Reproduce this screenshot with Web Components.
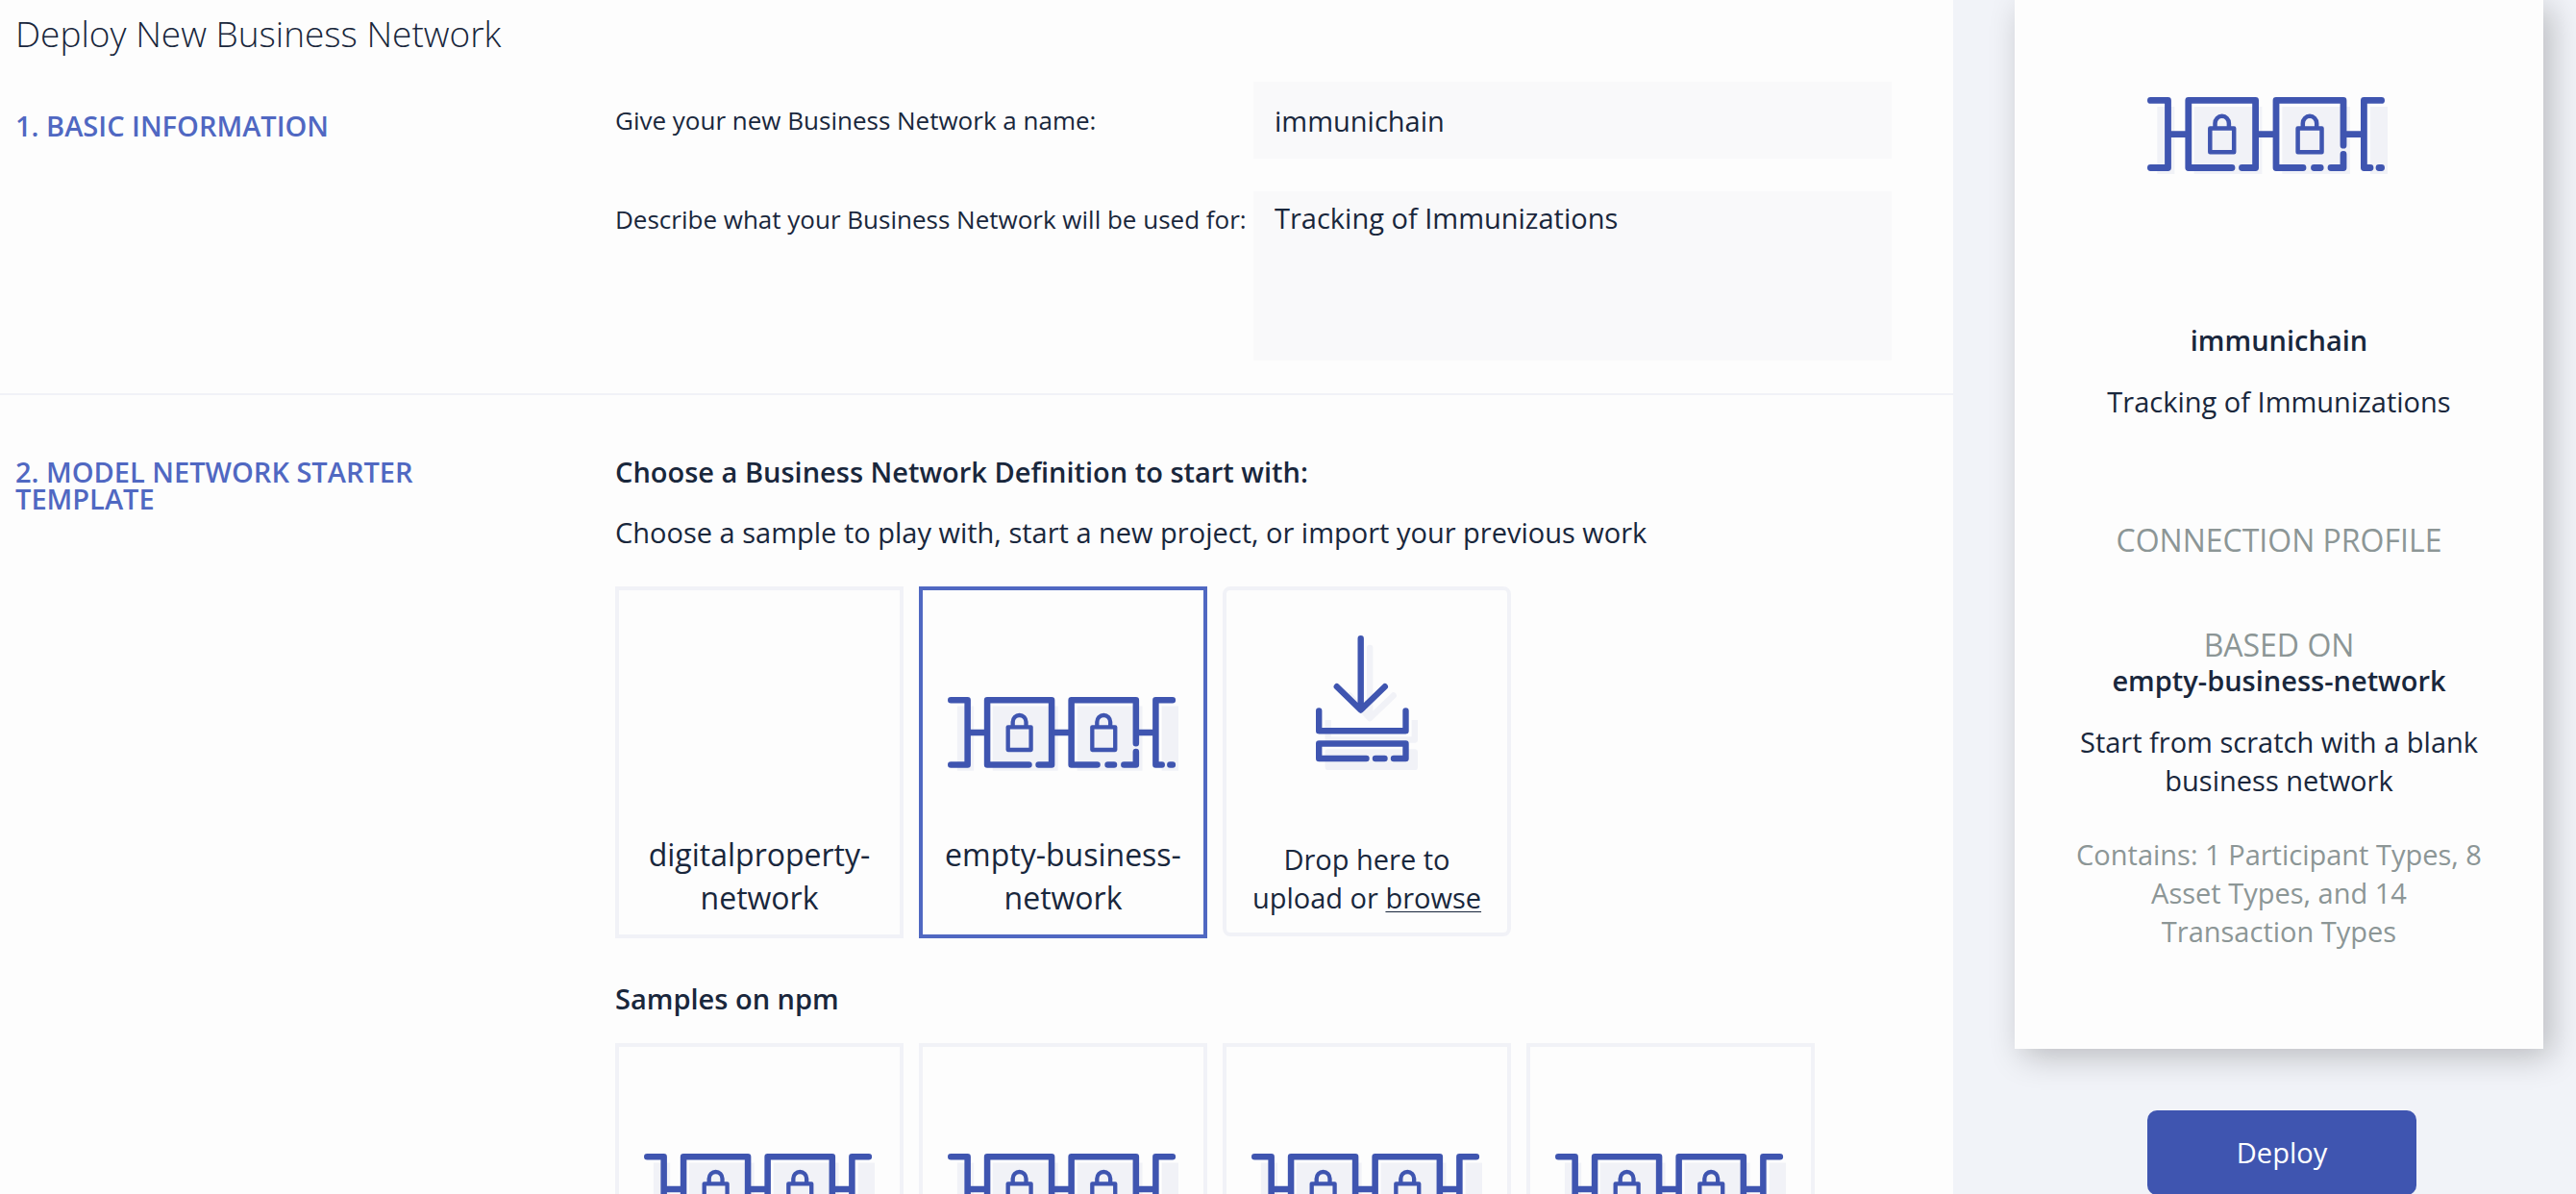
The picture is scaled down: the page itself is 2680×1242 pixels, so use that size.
<!DOCTYPE html>
<html lang="en">
<head>
<meta charset="utf-8">
<title>Deploy New Business Network</title>
<style>
  :root {
    --ink: #19273c;
    --accent: #3f55b0;
    --accent-soft: #5068c2;
    --muted: #8c9696;
    --line: #f1f2f7;
    --paper: #fdfdfd;
    --field: #f9f9fa;
  }
  body {
    margin: 0;
    font: 400 29px/40px "Open Sans", "Noto Sans", sans-serif;
    color: var(--ink);
    background: #f1f3f8;
  }
</style>
</head>
<body>
<deploy-page>
  <page-title slot="main">Deploy New Business Network</page-title>
  <form-section slot="main" heading="1. BASIC INFORMATION">
    <text-field label="Give your new Business Network a name:" value="immunichain"></text-field>
    <text-field multiline label="Describe what your Business Network will be used for:" value="Tracking of Immunizations"></text-field>
  </form-section>
  <form-section slot="main" class="templates" heading="2. MODEL NETWORK STARTER TEMPLATE">
    <template-group heading="Choose a Business Network Definition to start with:">
      <span slot="intro">Choose a sample to play with, start a new project, or import your previous work</span>
      <sample-card>digitalproperty-network</sample-card>
      <sample-card selected><chain-icon slot="icon"></chain-icon>empty-business-network</sample-card>
      <upload-card></upload-card>
    </template-group>
    <template-group heading="Samples on npm">
      <sample-card><chain-icon slot="icon"></chain-icon></sample-card>
      <sample-card><chain-icon slot="icon"></chain-icon></sample-card>
      <sample-card><chain-icon slot="icon"></chain-icon></sample-card>
      <sample-card><chain-icon slot="icon"></chain-icon></sample-card>
    </template-group>
  </form-section>
  <network-summary slot="side">
    <chain-icon slot="icon"></chain-icon>
    <span slot="name">immunichain</span>
    <span slot="description">Tracking of Immunizations</span>
    <span slot="base">empty-business-network</span>
    <span slot="base-description">Start from scratch with a blank business network</span>
    <span slot="contents">Contains: 1 Participant Types, 8 Asset Types, and 14 Transaction Types</span>
  </network-summary>
  <deploy-action slot="side">Deploy</deploy-action>
</deploy-page>

<script>
const define = (name, html, setup) => {
  const template = document.createElement('template');
  template.innerHTML = html;
  customElements.define(name, class extends HTMLElement {
    constructor() {
      super();
      this.attachShadow({ mode: 'open' }).append(template.content.cloneNode(true));
    }
    connectedCallback() {
      if (setup) setup(this, this.shadowRoot);
    }
  });
};

define('deploy-page', `
  <style>
    :host { display: flex; height: 100vh; }
    main, aside { box-sizing: border-box; overflow-y: auto; scrollbar-width: none; }
    main { flex: 1; min-width: 0; background: var(--paper); }
    aside { flex: 0 0 648px; padding: 0 34px 0 64px; }
  </style>
  <main><slot name="main"></slot></main>
  <aside><slot name="side"></slot></aside>`);

define('page-title', `
  <style>
    :host { display: block; padding: 11px 16px 26px; }
    h1 { margin: 0; font-size: 37px; line-height: 48px; font-weight: 300; }
  </style>
  <h1><slot></slot></h1>`);

define('form-section', `
  <style>
    :host { display: grid; grid-template-columns: 500px 1fr; column-gap: 124px; padding: 0 64px 34px 16px; border-bottom: 2px solid var(--line); }
    :host(.templates) { padding-top: 66px; border-bottom: 0; }
    h2 { margin: 32px 0 0; font-size: 29px; line-height: 28px; font-weight: 600; color: var(--accent-soft); }
    :host(.templates) h2 { margin-top: 0; }
    div { display: flex; flex-direction: column; gap: 34px; min-width: 0; }
    :host(.templates) div { gap: 49px; }
  </style>
  <h2></h2>
  <div><slot></slot></div>`, (host, root) => {
  root.querySelector('h2').textContent = host.getAttribute('heading');
});

define('text-field', `
  <style>
    :host { display: grid; grid-template-columns: 1fr 1fr; align-items: center; }
    :host([multiline]) { align-items: start; }
    label { font-size: 26px; line-height: 58px; white-space: nowrap; }
    input, textarea { display: block; box-sizing: border-box; width: 100%; height: 80px; margin: 0; padding: 8px 22px; border: 0; border-radius: 0; outline: 0; resize: none; background: var(--field); color: inherit; font: inherit; }
    textarea { height: 176px; }
  </style>
  <label for="control"></label>`, (host, root) => {
  root.querySelector('label').textContent = host.getAttribute('label');
  const control = document.createElement(host.hasAttribute('multiline') ? 'textarea' : 'input');
  control.id = 'control';
  control.value = host.getAttribute('value');
  root.append(control);
});

define('template-group', `
  <style>
    :host { display: block; }
    h3 { margin: 0 0 32px; font-size: 29px; line-height: 28px; font-weight: 600; }
    :host(.has-intro) h3 { margin-bottom: 29px; }
    p { margin: 0 0 36px; }
    p[hidden] { display: none; }
    div { display: flex; flex-wrap: wrap; align-items: flex-start; gap: 16px; }
  </style>
  <h3></h3>
  <p><slot name="intro"></slot></p>
  <div><slot></slot></div>`, (host, root) => {
  root.querySelector('h3').textContent = host.getAttribute('heading');
  const intro = Boolean(host.querySelector('[slot=intro]'));
  host.classList.toggle('has-intro', intro);
  root.querySelector('p').hidden = !intro;
});

define('sample-card', `
  <style>
    :host { display: block; flex: 0 0 300px; }
    button { display: flex; flex-direction: column; align-items: center; justify-content: flex-end; gap: 64px; box-sizing: border-box; width: 100%; height: 366px; margin: 0; padding: 16px; border: 4px solid var(--line); background: none; color: inherit; font: inherit; font-size: 32px; line-height: 45px; cursor: pointer; }
    :host([selected]) button { border-color: var(--accent-soft); }
    ::slotted(chain-icon) { width: 240px; }
    span { min-height: 90px; }
  </style>
  <button type="button"><slot name="icon"></slot><span><slot></slot></span></button>`, (host, root) => {
  root.querySelector('button').setAttribute('aria-pressed', host.hasAttribute('selected'));
});

define('upload-card', `
  <style>
    :host { display: flex; flex: 0 0 300px; flex-direction: column; align-items: center; justify-content: flex-end; gap: 73px; box-sizing: border-box; height: 364px; padding: 16px; border: 4px solid var(--line); border-radius: 8px; text-align: center; }
    svg { display: block; width: 106px; height: 140px; }
    p { margin: 0; }
    span { display: block; }
    a { color: inherit; text-decoration: underline; text-decoration-thickness: 1px; text-underline-offset: 3px; }
  </style>
  <svg viewBox="0 0 106 140" fill="none" stroke-width="6.4" stroke-linecap="round" stroke-linejoin="round" aria-hidden="true">
    <g stroke="#f1f2f7">
      <path d="M56.2 13V84.500M35 62.500L56.200 86L80.700 62.500"/>
      <path d="M12.700 88V108.500H102.800V88" stroke-linecap="butt"/>
      <path d="M12.700 121.500H102.800V137H12.700Z" fill="#f1f2f7"/>
    </g>
    <g stroke="#3f55b0">
      <path d="M46.700 3.200V76M21.800 53.200L46.700 77.500L71.800 53.200"/>
      <path d="M3.200 78.500V99.200H93.500V78.500"/>
      <path d="M52.500 128H3.200V112.500H93.500V128H81M62 128H71.500"/>
    </g>
  </svg>
  <p><span>Drop here to</span> <span>upload or <a href="#browse">browse</a></span></p>`);

define('chain-icon', `
  <style>
    :host { display: block; width: 250px; }
    svg { display: block; width: 100%; height: auto; }
  </style>
  <svg viewBox="14 11 250 80" aria-hidden="true">
    <path fill="#f1f2f7" d="M24.300 21h18v70h-18zM62.700 21h70.700v70h-70.700zM154.300 21h70.700v70h-70.700zM246 21h18v70h-18z"/>
    <g fill="none" stroke="#3f55b0" stroke-width="6.800" stroke-linecap="round" stroke-linejoin="round">
      <path d="M17.400 14.400H35.500V84.500H17.400"/>
      <path d="M102 84.500H56.800V14.400H126.600V84.500H112.500"/>
      <path d="M176 84.500H148V14.400H218V61.200M218 70.500V84.500H205M187.500 84.500H194.200"/>
      <path d="M257.600 14.400H239.400V84.500H246M255 84.500H257.600"/>
      <path stroke-linecap="butt" d="M36 49.600H57M127 49.600H148M218 49.600H239"/>
      <g stroke-width="4.500">
        <path d="M79.300 43.600H104.200V68.300H79.300Z"/>
        <path stroke-linecap="butt" d="M84.500 43V38.200A7.200 7.400 0 0 1 98.900 38.200V43"/>
      </g>
      <g stroke-width="4.500" transform="translate(91.300 0)">
        <path d="M79.300 43.600H104.200V68.300H79.300Z"/>
        <path stroke-linecap="butt" d="M84.500 43V38.200A7.200 7.400 0 0 1 98.900 38.200V43"/>
      </g>
    </g>
  </svg>`);

define('network-summary', `
  <style>
    :host { display: block; padding: 101px 60px 102px; background: var(--paper); box-shadow: 8px 8px 32px rgba(0, 0, 0, .23); text-align: center; }
    .icon { display: flex; justify-content: center; padding-right: 24px; margin-bottom: 153px; }
    h2, h3, h4, p { margin: 0; font: inherit; }
    h2, h4 { font-weight: 600; }
    p { margin-top: 24px; }
    h3 { margin-top: 74px; font-size: 32px; line-height: 35px; color: var(--muted); }
    h3.profile { margin-top: 106px; }
    p.contents { margin-top: 37px; color: var(--muted); }
  </style>
  <div class="icon"><slot name="icon"></slot></div>
  <h2><slot name="name"></slot></h2>
  <p><slot name="description"></slot></p>
  <h3 class="profile">CONNECTION PROFILE</h3>
  <h3>BASED ON</h3>
  <h4><slot name="base"></slot></h4>
  <p><slot name="base-description"></slot></p>
  <p class="contents"><slot name="contents"></slot></p>`);

define('deploy-action', `
  <style>
    :host { display: flex; justify-content: center; padding: 64px 0 0 6px; }
    button { width: 280px; height: 88px; margin: 0; padding: 0; border: 0; border-radius: 10px; background: var(--accent); color: #fff; font: inherit; font-weight: 500; cursor: pointer; }
  </style>
  <button type="button"><slot></slot></button>`);
</script>
</body>
</html>
